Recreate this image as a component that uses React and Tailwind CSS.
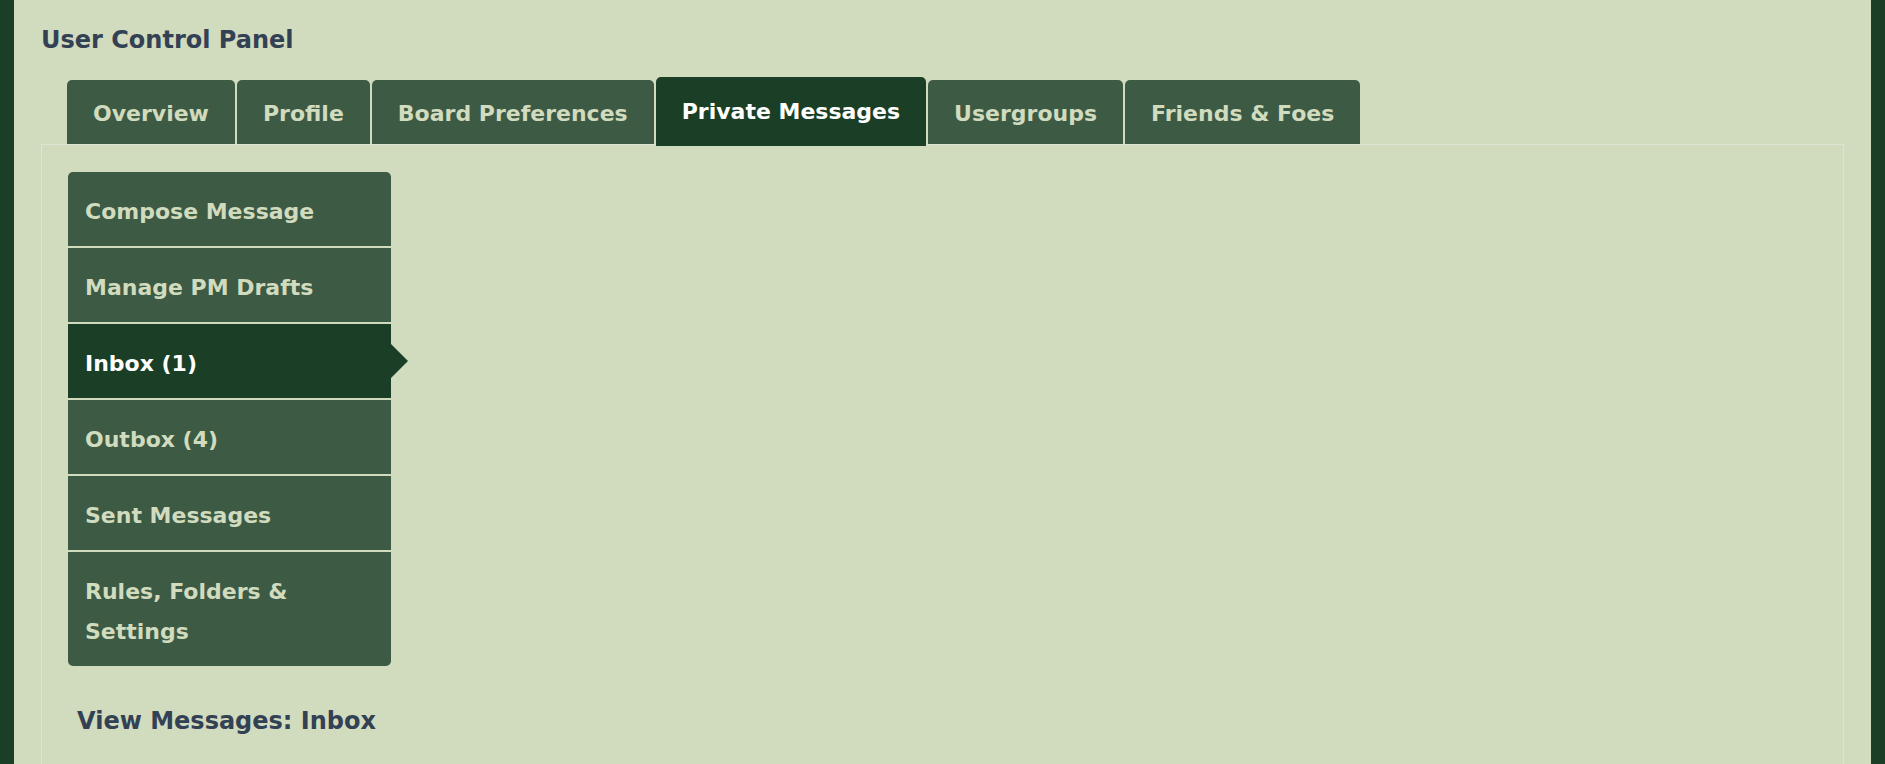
import React from "react";

const tabs = [
  { label: "Overview" },
  { label: "Profile" },
  { label: "Board Preferences" },
  { label: "Private Messages", active: true },
  { label: "Usergroups" },
  { label: "Friends & Foes" },
];

const menu = [
  { label: "Compose Message" },
  { label: "Manage PM Drafts" },
  { label: "Inbox (1)", active: true },
  { label: "Outbox (4)" },
  { label: "Sent Messages" },
  { label: "Rules, Folders & Settings" },
];

const App = () => {
  return (
    <div
      className="min-h-screen bg-[#1b3f26] px-[14px]"
      style={{ fontFamily: '"DejaVu Sans", Verdana, sans-serif' }}
    >
      <div className="min-h-[764px] bg-[#d1dbbd] px-[27px] pt-[26px]">
        <h2 className="text-[24px] font-bold leading-[28px] text-[#334155]">
          User Control Panel
        </h2>

        {/* tabs */}
        <div className="mt-[23px] flex items-end gap-[2px] pl-[26px]">
          {tabs.map((t) =>
            t.active ? (
              <div
                key={t.label}
                className="relative z-10 -mb-[2px] flex h-[69px] items-center rounded-t-[5px] bg-[#1b3f26] px-[26px] text-[22px] font-bold text-white"
              >
                {t.label}
              </div>
            ) : (
              <div
                key={t.label}
                className="flex h-[64px] cursor-pointer items-center rounded-t-[5px] bg-[#3d5a45] px-[26px] pt-[2px] text-[22px] font-bold text-[#d1dbbd]"
              >
                {t.label}
              </div>
            )
          )}
        </div>

        {/* panel */}
        <div className="min-h-[640px] border border-[#e0e2d8] pl-[26px] pt-[27px]">
          <ul className="flex w-[323px] flex-col gap-[2px]">
            {menu.map((m) => (
              <li
                key={m.label}
                className={
                  m.active
                    ? "relative bg-[#1b3f26] px-[17px] pb-[14px] pt-[20px] text-[22px] font-bold leading-[40px] text-white first:rounded-t-[5px] last:rounded-b-[5px]"
                    : "cursor-pointer bg-[#3d5a45] px-[17px] pb-[14px] pt-[20px] text-[22px] font-bold leading-[40px] text-[#d1dbbd] first:rounded-t-[5px] last:rounded-b-[5px]"
                }
              >
                {m.label}
                {m.active && (
                  <span className="absolute left-full top-1/2 -translate-y-1/2 border-y-[17px] border-l-[17px] border-y-transparent border-l-[#1b3f26]" />
                )}
              </li>
            ))}
          </ul>

          <h3 className="ml-[9px] mt-[41px] text-[24px] font-bold leading-[28px] text-[#334155]">
            View Messages: Inbox
          </h3>
        </div>
      </div>
    </div>
  );
};

export default App;
